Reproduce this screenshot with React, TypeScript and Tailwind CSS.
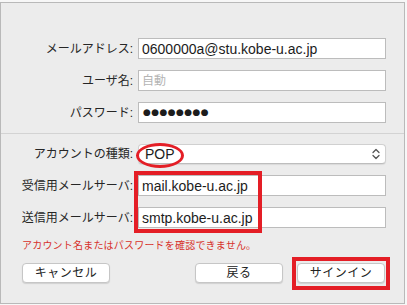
const font = '[font-family:"Liberation_Sans","Noto_Sans_CJK_JP",sans-serif]';

function Row({ label, children, className = '' }: { label: string; children: React.ReactNode; className?: string }) {
    return (
        <div className={`flex items-center ${className}`}>
            <div className="w-[132px] text-right text-[12px] text-[#262626] whitespace-nowrap">{label}</div>
            <div className="ml-[5px]">{children}</div>
        </div>
    );
}

function Field({ value, placeholder }: { value?: string; placeholder?: string }) {
    return (
        <div className="w-[248px] h-[21px] bg-white border border-[#bcbcbc] pl-[3px] flex items-center">
            {value ? (
                <span className="text-[14px] text-[#1c1c1c] leading-none">{value}</span>
            ) : (
                <span className="text-[12px] text-[#b4b4b4] leading-none">{placeholder}</span>
            )}
        </div>
    );
}

function Button({ label }: { label: string }) {
    return (
        <div className="w-[88px] h-[20px] bg-white border border-[#c6c6c6] rounded-[4px] shadow-[0_1px_1px_rgba(0,0,0,0.12)] flex items-center justify-center text-[12px] text-[#222] tracking-[0.5px]">
            {label}
        </div>
    );
}

export default function App() {
    return (
        <div className={`w-[407px] h-[305px] bg-[#f7f7f7] pt-[2px] ${font}`}>
            <div className="relative w-[405px] h-[302px] bg-[#ececec] border border-[#b9b9b9]">
                <div className="pt-[35px] flex flex-col gap-[11px]">
                    <Row label="メールアドレス:">
                        <Field value="0600000a@stu.kobe-u.ac.jp" />
                    </Row>
                    <Row label="ユーザ名:">
                        <Field placeholder="自動" />
                    </Row>
                    <Row label="パスワード:">
                        <div className="w-[248px] h-[21px] bg-white border border-[#bcbcbc] pl-[4px] flex items-center">
                            <span className="text-[9px] text-[#1c1c1c] tracking-[0.4px] leading-none [font-family:'DejaVu_Sans',sans-serif]">●●●●●●●●</span>
                        </div>
                    </Row>
                </div>

                <div className="mt-[10px] h-px bg-[#d3d3d3]" />

                <div className="mt-[10px] flex flex-col gap-[11px]">
                    <Row label="アカウントの種類:">
                        <div className="w-[248px] h-[20px] bg-white border border-[#d0d0d0] border-b-[#bdbdbd] rounded-[4px] shadow-[0_1px_1px_rgba(0,0,0,0.08)] pl-[6px] pr-[5px] flex items-center justify-between">
                            <span className="text-[14px] text-[#1c1c1c] leading-none">POP</span>
                            <svg width="8" height="12" viewBox="0 0 8 12" fill="none" stroke="#555" strokeWidth="1.3" strokeLinecap="round" strokeLinejoin="round">
                                <path d="M1 4.5 L4 1.5 L7 4.5" />
                                <path d="M1 7.5 L4 10.5 L7 7.5" />
                            </svg>
                        </div>
                    </Row>
                    <Row label="受信用メールサーバ:">
                        <Field value="mail.kobe-u.ac.jp" />
                    </Row>
                    <Row label="送信用メールサーバ:">
                        <Field value="smtp.kobe-u.ac.jp" />
                    </Row>
                </div>

                <div className="mt-[11px] pl-[21px] text-[10px] leading-[14px] text-[#d7312b] tracking-[0.2px]">
                    アカウント名またはパスワードを確認できません。
                </div>

                <div className="mt-[10px] pl-[21px] pr-[19px] flex items-center">
                    <Button label="キャンセル" />
                    <div className="ml-auto flex gap-[14px]">
                        <Button label="戻る" />
                        <Button label="サインイン" />
                    </div>
                </div>

                {/* red annotation marks */}
                <div className="absolute left-[135px] top-[140px] w-[48px] h-[25px] rounded-[50%] border-[3px] border-[#e41e26]" />
                <div className="absolute left-[133px] top-[168px] w-[128px] h-[62px] border-[4px] border-[#e41e26]" />
                <div className="absolute left-[291px] top-[254px] w-[98px] h-[33px] border-[4px] border-[#e41e26]" />
            </div>
        </div>
    );
}
